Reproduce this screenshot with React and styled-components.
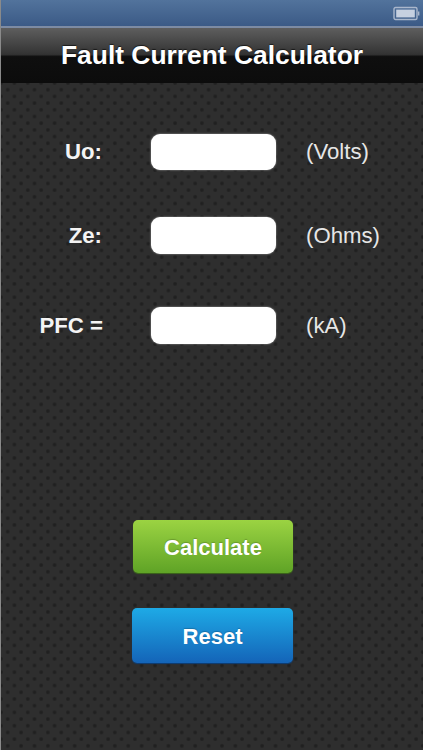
import React from 'react';
import styled, { createGlobalStyle } from 'styled-components';

const GlobalStyle = createGlobalStyle`
  html, body {
    margin: 0;
    padding: 0;
    background: #2b2b2b;
  }
  body {
    font-family: "Liberation Sans", Arial, sans-serif;
  }
`;

const Screen = styled.div`
  width: 423px;
  height: 750px;
  overflow: hidden;
  display: flex;
  flex-direction: column;
  box-sizing: border-box;
  border-left: 1px solid #8a8a8a;
  background-color: #2e2e2e;
`;

const StatusBar = styled.div`
  height: 26px;
  flex-shrink: 0;
  display: flex;
  align-items: center;
  justify-content: flex-end;
  padding-right: 2px;
  background: linear-gradient(#52739c, #3b5a86);
  border-bottom: 2px solid #7d8ba3;
`;

const Header = styled.h1`
  margin: 0;
  height: 55px;
  flex-shrink: 0;
  display: flex;
  align-items: center;
  justify-content: center;
  font-size: 26.4px;
  font-weight: 700;
  color: #fff;
  text-shadow: 0 -1px 1px rgba(0, 0, 0, 0.6);
  background: linear-gradient(#5e5e5e 0%, #333 48%, #0f0f0f 52%, #0c0c0c 100%);
`;

const Body = styled.main`
  flex: 1;
  padding-top: 51px;
  background-color: #2e2e2e;
  background-image:
    radial-gradient(circle at center, #202020 0, #202020 1.2px, transparent 2.4px),
    radial-gradient(circle at center, #202020 0, #202020 1.2px, transparent 2.4px);
  background-size: 13.4px 13.4px;
  background-position: 0 0, 6.7px 6.7px;
`;

const Row = styled.div`
  display: grid;
  grid-template-columns: 101px 125px auto;
  align-items: center;
  height: ${({ $height }) => $height}px;
  margin-bottom: ${({ $gap }) => $gap}px;
`;

const Label = styled.label`
  justify-self: end;
  font-size: 22.2px;
  font-weight: 700;
  color: #f4f4f4;
  margin-right: ${({ $shift }) => $shift || 0}px;
  white-space: nowrap;
`;

const Field = styled.div`
  grid-column: 2;
  margin-left: 49px;
  width: 125px;
  height: 100%;
  border-radius: 9px;
  background: #fff;
  box-shadow: 0 0 2px rgba(255, 255, 255, 0.6);
`;

const Unit = styled.span`
  margin-left: 79px;
  font-size: 22.2px;
  color: #e6e6e6;
  white-space: nowrap;
`;

const Actions = styled.div`
  display: flex;
  flex-direction: column;
  align-items: flex-start;
  margin-top: 176px;
  gap: 35px;
`;

const Button = styled.button`
  display: block;
  width: ${({ $width }) => $width}px;
  height: ${({ $height }) => $height}px;
  margin-left: ${({ $left }) => $left}px;
  padding: 2px 0 0;
  border: 0;
  border-radius: 5px;
  font-family: inherit;
  font-size: 22px;
  font-weight: 700;
  color: #fff;
  background: ${({ $from, $to }) => `linear-gradient(${$from}, ${$to})`};
  box-shadow: 0 1px 1px ${({ $edge }) => $edge};
  text-shadow: 0 -1px 1px rgba(0, 0, 0, 0.2);
`;

function BatteryIcon() {
  return (
    <svg width="28" height="15" viewBox="0 0 28 15" aria-hidden="true">
      <rect x="1" y="1.5" width="23" height="12" rx="1.5" fill="none" stroke="#aab7cc" strokeWidth="1.4" />
      <rect x="3.2" y="3.6" width="18.6" height="7.8" fill="#c6d0e0" />
      <path d="M25 5.5h1.4v4H25z" fill="#aab7cc" />
    </svg>
  );
}

const rows = [
  { label: 'Uo:', unit: '(Volts)', height: 36, gap: 47 },
  { label: 'Ze:', unit: '(Ohms)', height: 37, gap: 53 },
  { label: 'PFC =', unit: '(kA)', height: 37, gap: 0, shift: -1 },
];

export default function App() {
  return (
    <Screen>
      <GlobalStyle />
      <StatusBar>
        <BatteryIcon />
      </StatusBar>
      <Header>Fault Current Calculator</Header>
      <Body>
        {rows.map((row) => (
          <Row key={row.label} $height={row.height} $gap={row.gap}>
            <Label $shift={row.shift}>{row.label}</Label>
            <Field />
            <Unit>{row.unit}</Unit>
          </Row>
        ))}
        <Actions>
          <Button $width={160} $height={53} $left={132} $from="#9bd342" $to="#5fa326" $edge="#3d6a1a">
            Calculate
          </Button>
          <Button $width={161} $height={55} $left={131} $from="#1eaae6" $to="#1464b8" $edge="#0d3f78">
            Reset
          </Button>
        </Actions>
      </Body>
    </Screen>
  );
}
